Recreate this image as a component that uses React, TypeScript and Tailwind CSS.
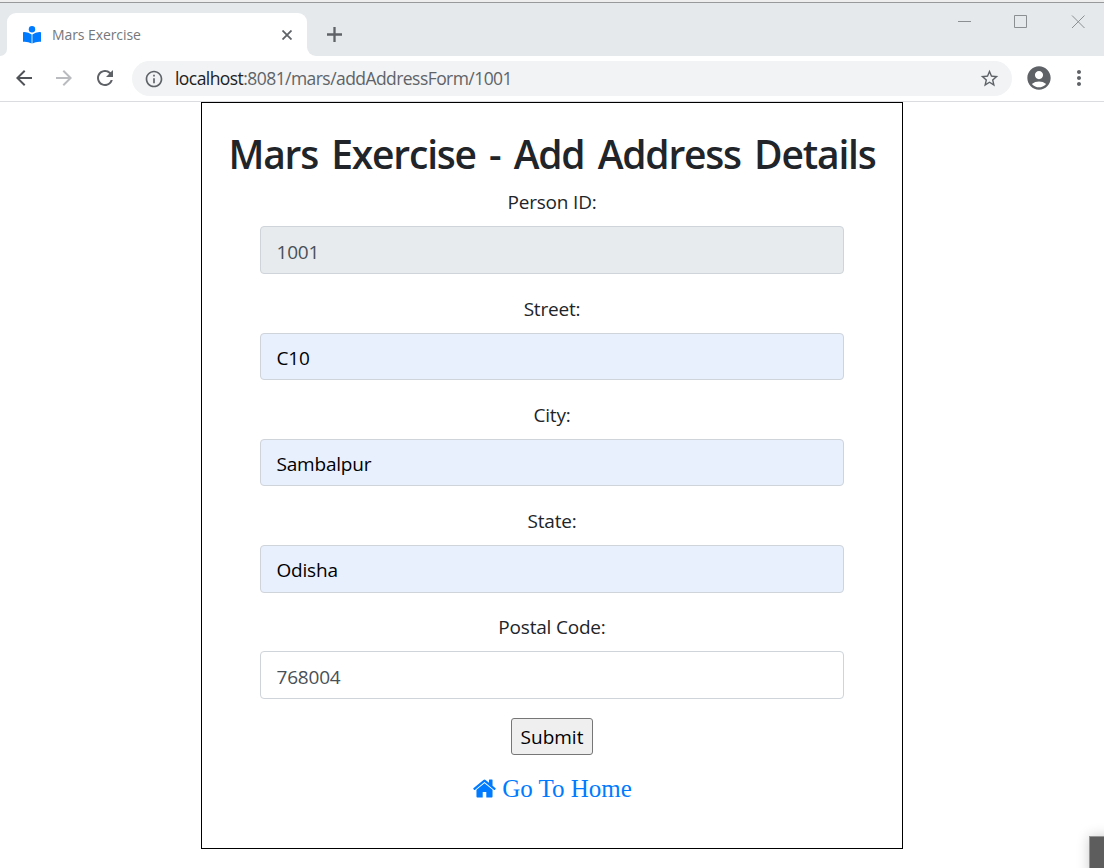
import React from "react";
import {
  MdArrowBack, MdArrowForward, MdRefresh, MdInfoOutline,
  MdStarBorder, MdAccountCircle, MdMoreVert,
} from "react-icons/md";

type Field = { label: string; value: string; inputClass: string; textClass: string };

const fields: Field[] = [
  { label: "Person ID:", value: "1001", inputClass: "h-12 mb-[11px] bg-[#e8ebee] text-[#495057] pt-[4px]", textClass: "tracking-[-0.2px]" },
  { label: "Street:", value: "C10", inputClass: "h-[47px] mb-[11px] bg-[#e8f0fe] text-black pt-[4px]", textClass: "tracking-[-0.2px]" },
  { label: "City:", value: "Sambalpur", inputClass: "h-[47px] mb-[11px] bg-[#e8f0fe] text-black pt-[4px]", textClass: "tracking-[-0.2px]" },
  { label: "State:", value: "Odisha", inputClass: "h-12 mb-[10px] bg-[#e8f0fe] text-black pt-[2px]", textClass: "tracking-[-0.2px]" },
  { label: "Postal Code:", value: "768004", inputClass: "h-12 mb-[19px] bg-white text-[#495057] pt-[4px]", textClass: "tracking-[-0.2px]" },
];

function ReaderIcon() {
  return (
    <svg className="h-[18px] w-[18px] shrink-0" viewBox="0 0 18 18" fill="#007bff">
      <circle cx="9" cy="3.2" r="3.2" />
      <path d="M0 6.2Q5 5.6 8.6 8.6V17.4Q5 15.4 0 15.8zM18 6.2Q13 5.6 9.4 8.6V17.4Q13 15.4 18 15.8z" />
    </svg>
  );
}

function TabStrip() {
  return (
    <div className="flex h-[53px] bg-[#e5e9ec]">
      <div className="flex w-[7px] items-end bg-white">
        <div className="h-full w-full rounded-br-[7px] bg-[#e5e9ec]" />
      </div>
      <div className="mt-[10px] flex h-[43px] w-[300px] items-center rounded-t-[9px] bg-white pl-[16px]">
        <ReaderIcon />
        <span className="ml-[11px] whitespace-nowrap text-[14px] tracking-[-0.08px] text-[#75787b]">Mars Exercise</span>
        <svg className="ml-auto mr-[15px] size-[10px]" viewBox="0 0 10 10" fill="none" stroke="#5f6368" strokeWidth="1.8">
          <path d="M0.5 0.5l9 9M9.5 0.5l-9 9" />
        </svg>
      </div>
      <div className="flex flex-1 bg-white">
        <div className="flex flex-1 rounded-bl-[9px] bg-[#e5e9ec]">
          <svg className="ml-[20px] mt-[24px] size-[15px]" viewBox="0 0 15 15" fill="none" stroke="#5f6368" strokeWidth="2.3">
            <path d="M0 7.5h15M7.5 0v15" />
          </svg>
          <svg className="ml-auto mt-[10px] h-[18px] w-[154px]" viewBox="0 0 154 18" fill="none" stroke="#8b8f92" strokeWidth="1">
            <path d="M8 8.5h13M64.5 2.5h12v12h-12zM122 2.5l12.5 12.5M134.5 2.5L122 15" />
          </svg>
        </div>
      </div>
    </div>
  );
}

function Toolbar() {
  return (
    <div className="flex h-[46px] items-center border-b border-[#dadce0] bg-white pl-[12px] text-[#5f6368]">
      <MdArrowBack className="mb-[2px] size-6 text-[#505459]" />
      <MdArrowForward className="mb-[2px] ml-4 size-6 text-[#b9bbbe]" />
      <MdRefresh className="mb-[2px] ml-[17px] size-6" />
      <div className="ml-[15px] flex h-[35px] w-[880px] items-center rounded-full bg-[#f1f3f4] pl-[12px] pr-[12px]">
        <MdInfoOutline className="size-5" />
        <span className="ml-[11px] whitespace-nowrap text-[17.5px] tracking-[-0.56px]">
          <span className="text-[#202124]">localhost</span>:8081/mars/addAddressForm/1001
        </span>
        <MdStarBorder className="ml-auto size-[21px]" />
      </div>
      <MdAccountCircle className="mb-[2px] ml-[13px] size-7" />
      <MdMoreVert className="mb-[2px] ml-[14px] size-6" />
    </div>
  );
}

function HomeIcon() {
  return (
    <svg className="mb-[2px] size-[25px]" viewBox="0 0 1792 1792" fill="#007bff">
      <path d="M1472 992v480q0 26-19 45t-45 19h-384v-384h-256v384h-384q-26 0-45-19t-19-45v-480q0-1 .5-3t.5-3l575-474 575 474q1 2 1 6zm223-69l-62 74q-8 9-21 11h-3q-13 0-21-7l-692-577-692 577q-12 8-24 7-13-2-21-11l-62-74q-8-10-7-23.5t11-21.5l719-599q32-26 76-26t76 26l244 204v-195q0-14 9-23t23-9h192q14 0 23 9t9 23v408l219 182q10 8 11 21.5t-7 23.5z" />
    </svg>
  );
}

export default function App() {
  return (
    <div className="relative h-[868px] w-[1104px] overflow-hidden bg-white font-['Open_Sans','Noto_Sans',sans-serif]">
      <div className="h-[3px] border-b border-[#97999b] bg-[#eeeeee]" />
      <TabStrip />
      <Toolbar />
      <main className="mx-auto flex h-[747px] w-[702px] flex-col items-center border border-black">
        <h1 className="mt-[21px] flex h-[54px] items-center whitespace-nowrap pt-[6px] text-[39px] font-semibold tracking-[-1.2px] [word-spacing:4.3px] text-[#212529]">
          Mars Exercise - Add Address Details
        </h1>
        {fields.map((f) => (
          <React.Fragment key={f.label}>
            <div className="flex h-12 items-center text-[19px] tracking-[-0.2px] text-[#212529]">{f.label}</div>
            <div className={`flex w-[584px] shrink-0 items-center rounded-[4px] border border-[#ced4da] pl-[15.5px] text-[19px] ${f.inputClass}`}>
              <span className={f.textClass}>{f.value}</span>
            </div>
          </React.Fragment>
        ))}
        <button className="flex h-[37px] w-[82px] items-center justify-center rounded-[3px] border border-[#767676] bg-[#efefef] pt-[2px] text-[19px] text-black">
          Submit
        </button>
        <a className="mt-[18px] flex h-[32px] items-center whitespace-nowrap font-['Liberation_Serif',serif] text-[25px] text-[#007bff]">
          <HomeIcon />
          <span className="ml-[5px]">Go To Home</span>
        </a>
      </main>
      <div className="absolute left-[1089px] top-[836px] h-10 w-10 border border-[#949494] bg-[#5c5d5c] shadow-[0_0_12px_rgba(0,0,0,0.2)]" />
    </div>
  );
}
